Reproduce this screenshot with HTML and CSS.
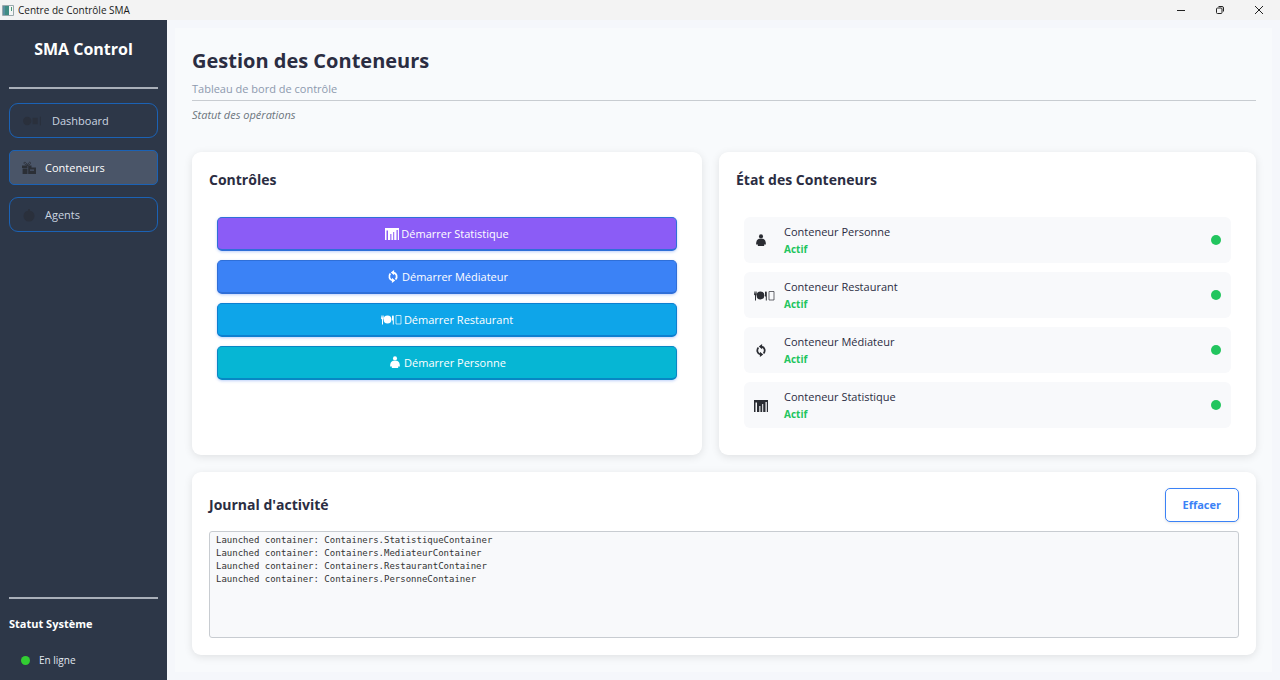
FILE: index.html
```html
<!DOCTYPE html>
<html lang="fr">
<head>
<meta charset="utf-8">
<meta name="viewport" content="width=device-width, initial-scale=1">
<title>Centre de Contrôle SMA</title>
<link rel="stylesheet" href="styles.css">
</head>
<body>
<svg class="sprite" aria-hidden="true">
  <symbol id="i-chart" viewBox="0 0 14 13"><path d="M0 1h14v12h-1.200V3h-1.300v10H9.200V5H8.200v8H6.400V7H5.300v6H3V3.400H1.500V13H0z"/></symbol>
  <symbol id="i-sync" viewBox="0 0 12 14"><path d="M6.500 2.800C10 3.400 11 7.500 8.800 10.200M5.500 11.200C2 10.600 1 6.500 3.200 3.800" fill="none" stroke="currentColor" stroke-width="1.900"/><path d="M7.200 0v5.600L3.600 2.800zM4.800 14V8.400l3.600 2.800z"/></symbol>
  <symbol id="i-meal" viewBox="0 0 21 12"><circle cx="6.500" cy="6" r="3.900"/><path d="M0 2h.6v2h.5V2h.6v2h.5V2h.6v3L2 6v5H1V6L0 5zM11 2.500c1-.8 1.800-.5 1.800.8V11h-1V7H11z"/><path d="M15 2h5v8.500h-5z" fill="none" stroke="currentColor" stroke-width=".7"/></symbol>
  <symbol id="i-person" viewBox="0 0 12 14"><circle cx="6" cy="2.600" r="2.200"/><path d="M3.800 5.200h4.400c2 .6 3.100 2.500 3.100 6H9.400V13H2.600v-1.800H.7c0-3.500 1.100-5.400 3.100-6z"/></symbol>
  <symbol id="i-gift" viewBox="0 0 14 14"><path d="M0 4.500h5.500V7H0zM.6 7.500h4.900V13H.6zM6.200 4.500h3.300V6.500H14V13H6.200zM8 8.500v1.200h4V8.500z" fill-rule="evenodd"/><path d="M5.500 4.500C3 4 1.200 2 2.300 1.300S5 3 5.500 4.500c.2-1.500 1.700-4 2.700-3.200S8 4 5.500 4.500" fill="none" stroke="currentColor" stroke-width=".8"/></symbol>
</svg>

<header class="titlebar">
  <svg class="app-icon" viewBox="0 0 12 11"><path d="M.5.500h11v10H.5z" fill="#f4f6f6" stroke="#9aa8ac"/><path d="M1 1h6v9H1z" fill="#3f8c83"/><path d="M1 1h2v9H1z" fill="#5a8fa0"/><path d="M9 2h1v4H9z" fill="#4b9a78"/></svg>
  <span class="app-name">Centre de Contrôle SMA</span>
  <div class="window-buttons">
    <button type="button" aria-label="Réduire"><svg viewBox="0 0 10 10"><path d="M1 5.500h8"/></svg></button>
    <button type="button" aria-label="Restaurer"><svg viewBox="0 0 10 10"><rect x="1.500" y="3" width="5.500" height="5.500" rx="1"/><path d="M3.500 1.500H7A1.500 1.500 0 0 1 8.500 3v3.500"/></svg></button>
    <button type="button" aria-label="Fermer"><svg viewBox="0 0 10 10"><path d="M1 1l8 8M9 1L1 9"/></svg></button>
  </div>
</header>

<div class="shell">
  <aside class="sidebar">
    <h2 class="brand">SMA Control</h2>
    <nav class="nav">
      <button type="button" class="nav-item"><svg class="nav-icon wide" viewBox="0 0 20 12"><circle cx="5" cy="6" r="4"/><path d="M10 3h5v6h-5zM17 2h1v8h-1z"/></svg>Dashboard</button>
      <button type="button" class="nav-item active" aria-current="page"><svg class="nav-icon"><use href="#i-gift"/></svg>Conteneurs</button>
      <button type="button" class="nav-item"><svg class="nav-icon" viewBox="0 0 14 14"><circle cx="7" cy="8" r="5.500"/><path d="M6 1h2v3H6z"/></svg>Agents</button>
    </nav>
    <footer class="system">
      <h3 class="system-title">Statut Système</h3>
      <p class="system-state"><span class="dot online"></span>En ligne</p>
    </footer>
  </aside>

  <main class="main">
    <div class="page">
      <header class="page-head">
        <h1 class="page-title">Gestion des Conteneurs</h1>
        <p class="page-sub">Tableau de bord de contrôle</p>
        <p class="page-note">Statut des opérations</p>
      </header>

      <div class="columns">
        <section class="card">
          <h2 class="card-title">Contrôles</h2>
          <div class="stack">
            <button type="button" class="launch violet"><svg class="icon"><use href="#i-chart"/></svg>Démarrer Statistique</button>
            <button type="button" class="launch blue"><svg class="icon"><use href="#i-sync"/></svg>Démarrer Médiateur</button>
            <button type="button" class="launch sky"><svg class="icon wide"><use href="#i-meal"/></svg>Démarrer Restaurant</button>
            <button type="button" class="launch cyan"><svg class="icon"><use href="#i-person"/></svg>Démarrer Personne</button>
          </div>
        </section>

        <section class="card">
          <h2 class="card-title">État des Conteneurs</h2>
          <ul class="stack states">
            <li class="state"><span class="state-icon"><svg class="icon"><use href="#i-person"/></svg></span><div class="state-text"><span>Conteneur Personne</span><strong>Actif</strong></div><span class="dot active"></span></li>
            <li class="state"><span class="state-icon"><svg class="icon wide"><use href="#i-meal"/></svg></span><div class="state-text"><span>Conteneur Restaurant</span><strong>Actif</strong></div><span class="dot active"></span></li>
            <li class="state"><span class="state-icon"><svg class="icon"><use href="#i-sync"/></svg></span><div class="state-text"><span>Conteneur Médiateur</span><strong>Actif</strong></div><span class="dot active"></span></li>
            <li class="state"><span class="state-icon"><svg class="icon"><use href="#i-chart"/></svg></span><div class="state-text"><span>Conteneur Statistique</span><strong>Actif</strong></div><span class="dot active"></span></li>
          </ul>
        </section>
      </div>

      <section class="card journal">
        <div class="journal-head">
          <h2 class="card-title"><label for="log">Journal d'activité</label></h2>
          <button type="button" class="clear">Effacer</button>
        </div>
        <textarea id="log" class="log" readonly>Launched container: Containers.StatistiqueContainer
Launched container: Containers.MediateurContainer
Launched container: Containers.RestaurantContainer
Launched container: Containers.PersonneContainer</textarea>
      </section>
    </div>
  </main>
</div>
</body>
</html>
```
FILE: styles.css
```css
* { box-sizing: border-box; }

body {
  margin: 0;
  min-height: 100vh;
  display: flex;
  flex-direction: column;
  background: #f5f7fb;
  color: #2b2d42;
  font: 11px/18px "Open Sans", "Noto Sans", sans-serif;
}

h1, h2, h3, p, ul { margin: 0; padding: 0; }
button { font: inherit; cursor: pointer; }
.sprite { position: absolute; width: 0; height: 0; }

.titlebar {
  display: flex;
  align-items: center;
  height: 20px;
  padding: 0 2px;
  background: #f3f3f3;
  color: #1a1a1a;
}
.app-icon { width: 12px; height: 11px; margin-right: 4px; }
.app-name { font-size: 10px; }
.window-buttons { display: flex; margin-left: auto; }
.window-buttons button {
  display: grid;
  place-items: center;
  width: 39px;
  height: 20px;
  padding: 0;
  border: 0;
  background: none;
}
.window-buttons svg { width: 10px; height: 10px; fill: none; stroke: #222; }

.shell { flex: 1; display: flex; }

.sidebar {
  flex: none;
  display: flex;
  flex-direction: column;
  width: 167px;
  padding: 0 9px 11px;
  background: #2d3748;
  color: #fff;
}
.brand {
  padding: 17px 0 26px;
  border-bottom: 2px solid #a9afb9;
  font-size: 16px;
  line-height: 24px;
  text-align: center;
}
.nav { display: flex; flex-direction: column; gap: 12px; padding-top: 14px; }
.nav-item {
  display: flex;
  align-items: center;
  gap: 9px;
  height: 35px;
  padding: 0 12px;
  border: 1px solid #1b62b5;
  border-radius: 9px;
  background: none;
  color: #cbd5e0;
}
.nav-item.active { border-radius: 5px; background: #4a5568; color: #fff; }
.nav-icon { width: 14px; height: 14px; fill: #2a303c; color: #2a303c; }
.nav-icon.wide { width: 21px; }
.nav-item.active .nav-icon { fill: #2b2f36; color: #2b2f36; }
.system { margin-top: auto; border-top: 2px solid #a9afb9; }
.system-title { padding: 16px 0 18px; font-size: 11px; line-height: 18px; }
.system-state { display: flex; align-items: center; gap: 9px; padding-left: 12px; font-size: 10px; color: #e2e8f0; }

.dot { flex: none; width: 10px; height: 10px; border-radius: 50%; background: #22c55e; }
.dot.online { width: 9px; height: 9px; background: #32cd32; }

.main { flex: 1; display: flex; min-width: 0; padding: 8px; }
.page { flex: 1; display: flex; flex-direction: column; gap: 17px; min-width: 0; padding: 17px 16px 17px 17px; background: #f8fafc; }
.page-head { padding-bottom: 11px; }
.page-title { font-size: 20px; line-height: 31px; }
.page-sub { padding: 4px 0 2px; border-bottom: 1px solid #c8ccd1; color: #8d99ae; }
.page-note { padding-top: 5px; color: #6c757d; font-style: italic; }

.columns { display: grid; grid-template-columns: 510fr 537fr; gap: 17px; }
.card {
  padding: 16px 17px 17px;
  border-radius: 9px;
  background: #fff;
  box-shadow: 0 2px 8px rgba(0, 0, 0, 0.1);
}
.card-title { font-size: 14px; line-height: 24px; }
.stack { display: flex; flex-direction: column; gap: 9px; padding: 25px 8px 10px; }

.icon { flex: none; width: 14px; height: 13px; fill: currentColor; }
.icon.wide { width: 21px; }

.launch {
  display: flex;
  align-items: center;
  justify-content: center;
  gap: 2px;
  height: 34px;
  padding: 0;
  border: 1px solid #2f6fd8;
  border-bottom-width: 2px;
  border-radius: 5px;
  color: #fff;
  box-shadow: 0 1px 3px rgba(37, 99, 235, 0.3);
}
.violet { background: #8b5cf6; }
.blue { background: #3b82f6; }
.sky { background: #0ea5e9; border-color: #0c7fd0; }
.cyan { background: #06b6d4; border-color: #0787c4; }

.states { list-style: none; }
.state { display: flex; align-items: center; height: 46px; padding: 0 10px; border-radius: 6px; background: #f8f9fb; }
.state-icon { display: flex; width: 30px; color: #2b2d33; }
.state-text { flex: 1; display: flex; flex-direction: column; }
.state-text span { line-height: 18px; }
.state-text strong { font-size: 10px; line-height: 16px; color: #22c55e; }

.journal { flex: 1; display: flex; flex-direction: column; gap: 9px; }
.journal-head { display: flex; align-items: center; justify-content: space-between; }
.clear {
  height: 34px;
  padding: 0 17px;
  border: 1px solid #3b82f6;
  border-radius: 5px;
  background: #fff;
  color: #3b82f6;
  font-weight: 700;
  box-shadow: 0 1px 3px rgba(0, 0, 0, 0.1);
}
.log {
  flex: 1;
  width: 100%;
  min-height: 107px;
  padding: 2px 6px;
  border: 1px solid #c8ccd1;
  border-radius: 3px;
  background: #f8f9fb;
  color: #333;
  font: 9px/13px "DejaVu Sans Mono", monospace;
  resize: none;
}
```
